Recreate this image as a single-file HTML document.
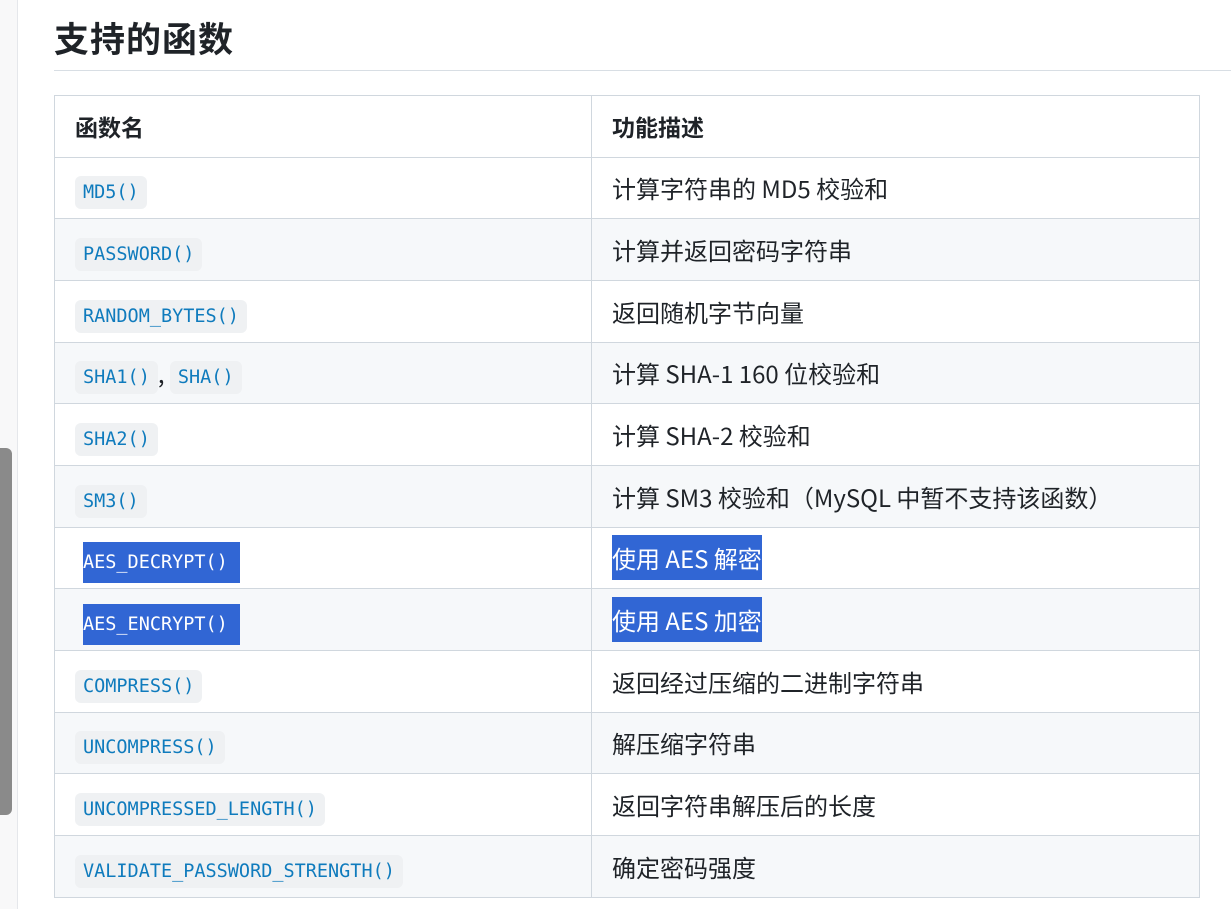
<!DOCTYPE html>
<html><head><meta charset="utf-8"><style>
body{margin:0;width:1231px;height:909px;overflow:hidden;background:#fff;font-family:"Liberation Sans","Noto Sans CJK SC",sans-serif;color:#1f2328;position:relative}
.side{position:absolute;left:0;top:0;width:17px;height:909px;background:#f8f8f9;border-right:1px solid #e5e7eb}
.thumb{position:absolute;left:0;top:448px;width:12px;height:367px;background:#8a8a8a;border-radius:0 6px 6px 0}
h2{position:absolute;left:54px;top:12px;margin:0;font-size:35px;font-weight:700;font-family:"Noto Sans CJK SC",sans-serif;color:#1f2328;letter-spacing:1px;line-height:52px}
.hr{position:absolute;left:54px;right:0;top:70px;border-top:1px solid #d8dee4}
table{position:absolute;left:54px;top:95px;border-collapse:collapse;width:1146px}
td,th{border:1px solid #d0d7de;height:60.67px;padding:0 20px;text-align:left;vertical-align:middle;font-size:24px;font-family:"Noto Sans CJK SC",sans-serif}
th{font-weight:700;font-size:23px}
td:first-child,th:first-child{width:496px}
tr:nth-child(odd) td{background:#f6f8fa}
tr.h th{background:#fff}
code{font-family:"DejaVu Sans Mono","Liberation Mono",monospace;font-size:18.5px;color:#0f7bbd;background:#eff1f3;padding:6px 8px;border-radius:6px}
.sel{background:#3166d4;color:#fff;padding:5px 0}
code.s{background:#3166d4;color:#fff;border-radius:0;padding:10px 12px 10px 0;margin-left:8px}
</style></head><body>
<div class="side"></div><div class="thumb"></div>
<h2>支持的函数</h2><div class="hr"></div>
<table>
<tr class="h"><th>函数名</th><th>功能描述</th></tr>
<tr><td><code>MD5()</code></td><td>计算字符串的 MD5 校验和</td></tr>
<tr><td><code>PASSWORD()</code></td><td>计算并返回密码字符串</td></tr>
<tr><td><code>RANDOM_BYTES()</code></td><td>返回随机字节向量</td></tr>
<tr><td><code>SHA1()</code>, <code>SHA()</code></td><td>计算 SHA-1 160 位校验和</td></tr>
<tr><td><code>SHA2()</code></td><td>计算 SHA-2 校验和</td></tr>
<tr><td><code>SM3()</code></td><td>计算 SM3 校验和（MySQL 中暂不支持该函数）</td></tr>
<tr><td><code class="s">AES_DECRYPT()</code></td><td><span class="sel">使用 AES 解密</span></td></tr>
<tr><td><code class="s">AES_ENCRYPT()</code></td><td><span class="sel">使用 AES 加密</span></td></tr>
<tr><td><code>COMPRESS()</code></td><td>返回经过压缩的二进制字符串</td></tr>
<tr><td><code>UNCOMPRESS()</code></td><td>解压缩字符串</td></tr>
<tr><td><code>UNCOMPRESSED_LENGTH()</code></td><td>返回字符串解压后的长度</td></tr>
<tr><td><code>VALIDATE_PASSWORD_STRENGTH()</code></td><td>确定密码强度</td></tr>
</table>
</body></html>
